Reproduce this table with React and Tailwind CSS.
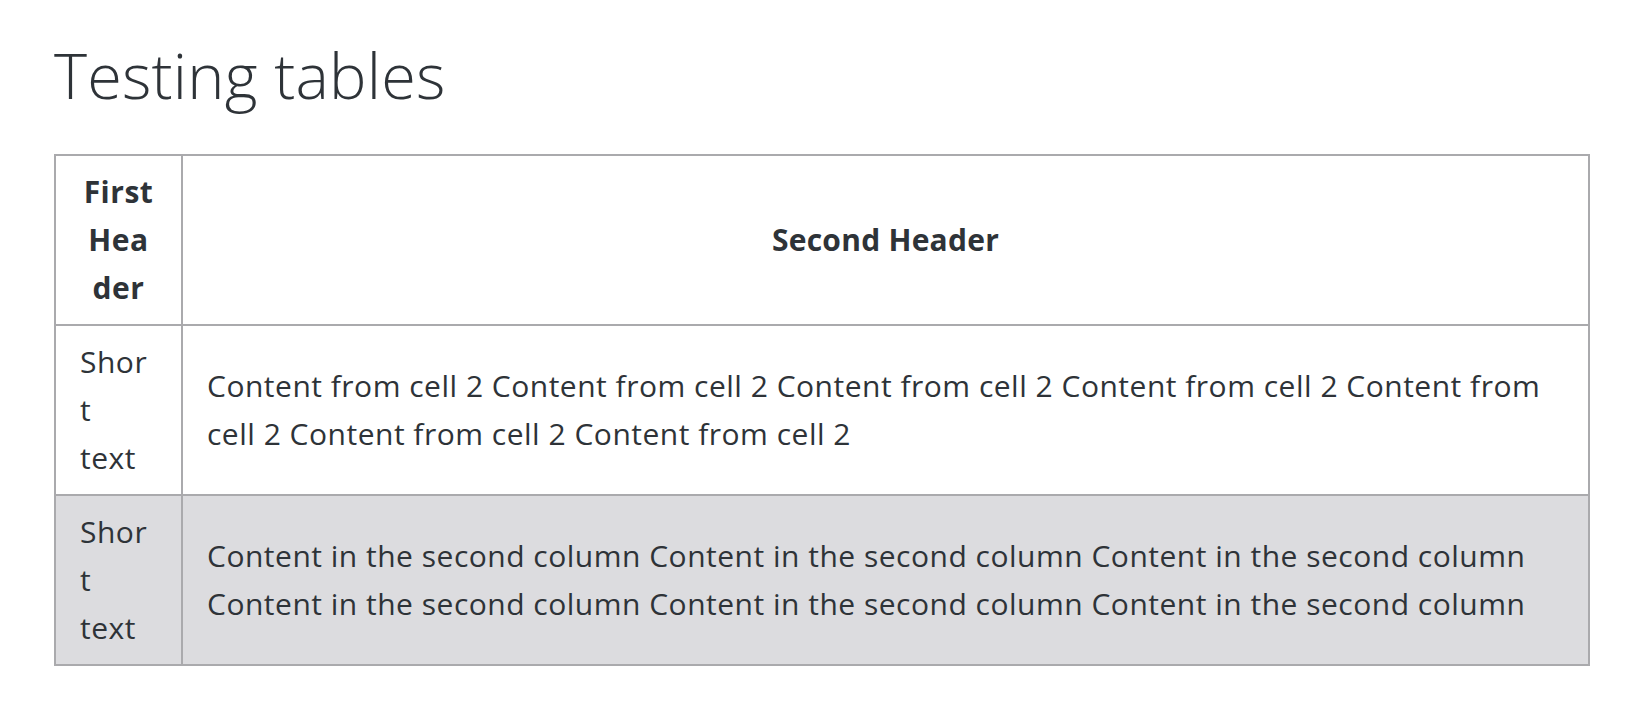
const rows = [
  {
    first: "Short text",
    second:
      "Content from cell 2 Content from cell 2 Content from cell 2 Content from cell 2 Content from cell 2 Content from cell 2 Content from cell 2",
  },
  {
    first: "Short text",
    second:
      "Content in the second column Content in the second column Content in the second column Content in the second column Content in the second column Content in the second column",
  },
];

export default function App() {
  return (
    <div className="min-h-[722px] bg-white px-[54px] pt-[37px] text-[#2e3338] font-['Open_Sans',sans-serif]">
      <h1 className="mb-[41px] text-[63px] font-light leading-[76px] tracking-[0.2px]">Testing tables</h1>

      <table className="w-full table-fixed border-collapse border-2 border-[#aaaaad] text-[30px] leading-[48px] tracking-[0.5px]">
        <thead>
          <tr>
            <th className="w-[127px] border-2 border-[#aaaaad] px-6 py-3 text-center font-bold [overflow-wrap:anywhere]">
              First Header
            </th>
            <th className="border-2 border-[#aaaaad] px-6 py-3 text-center font-bold tracking-[0.25px]">
              Second Header
            </th>
          </tr>
        </thead>
        <tbody>
          {rows.map((r, i) => (
            <tr key={i} className={i % 2 === 1 ? "bg-[#dcdcdf]" : "bg-white"}>
              <td className="border-2 border-[#aaaaad] py-3 pl-6 pr-[30px] text-left align-middle [overflow-wrap:anywhere]">
                {r.first}
              </td>
              <td className="border-2 border-[#aaaaad] px-6 py-3 text-left align-middle">{r.second}</td>
            </tr>
          ))}
        </tbody>
      </table>
    </div>
  );
}
